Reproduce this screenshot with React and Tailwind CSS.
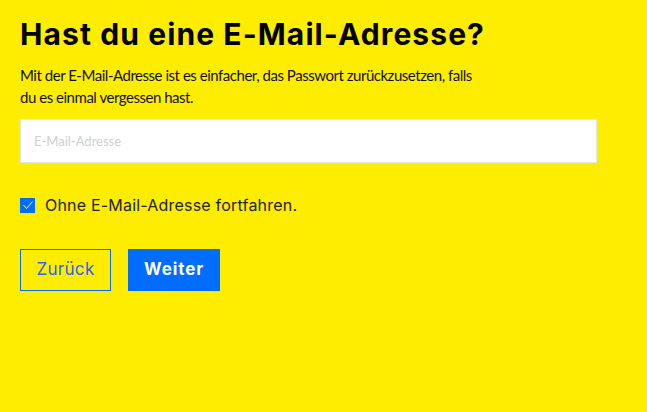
import React, { useState } from 'react';

const App = () => {
    const [skip, setSkip] = useState(true);

    return (
        <div className="min-h-screen w-full bg-[#ffed00] px-5 pt-[16px] font-['Inter','Liberation_Sans',sans-serif] text-black">
            {/* Heading */}
            <h1 className="text-[30px] font-bold leading-[36px] tracking-[1.1px]">Hast du eine E-Mail-Adresse?</h1>
            <p className="mt-[12px] w-[462px] font-['Lato','Liberation_Sans',sans-serif] text-[15px] leading-[22px] tracking-[-0.47px] text-[#111]">
                Mit der E-Mail-Adresse ist es einfacher, das Passwort zurückzusetzen, falls du es einmal vergessen hast.
            </p>

            {/* Email */}
            <input
                type="email"
                placeholder="E-Mail-Adresse"
                className="mt-[11px] block h-[44px] w-[577px] border border-[#e6e6e6] bg-white px-[13px] font-['Lato','Liberation_Sans',sans-serif] text-[13px] placeholder:text-[#d0d0d0] focus:outline-none"
            />

            {/* Checkbox */}
            <label className="mt-[30px] flex items-center gap-[10px] text-[16px] tracking-[0.2px] text-[#222]">
                <button
                    type="button"
                    onClick={() => setSkip(!skip)}
                    className="flex h-[15px] w-[15px] items-center justify-center bg-[#006dff]"
                >
                    {skip && (
                        <svg width="12" height="12" viewBox="0 0 12 12" fill="none">
                            <path d="M1.5 6 L4.5 9.5 L10.5 2.5" stroke="white" strokeWidth="0.9" />
                        </svg>
                    )}
                </button>
                Ohne E-Mail-Adresse fortfahren.
            </label>

            {/* Buttons */}
            <div className="mt-[32px] flex gap-[17px]">
                <button className="h-[42px] w-[91px] border border-[#006dff] text-[17px] tracking-[0.3px] text-[#2a62ff]">Zurück</button>
                <button className="h-[42px] w-[92px] bg-[#006dff] text-[17px] font-bold tracking-[0.9px] text-white">Weiter</button>
            </div>
        </div>
    );
};

export default App;
